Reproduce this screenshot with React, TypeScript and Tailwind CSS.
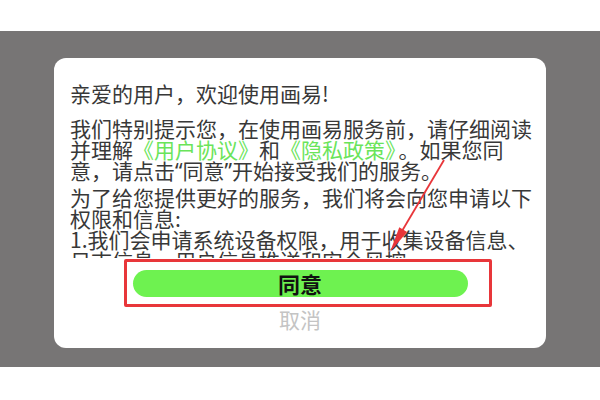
import React from 'react';

const bodyLines = [
  '为了给您提供更好的服务，我们将会向您申请以下',
  '权限和信息:',
  '1.我们会申请系统设备权限，用于收集设备信息、',
  '日志信息，用户信息推送和安全风控',
];

function PrivacyDialog() {
  return (
    <div className="relative w-[492px] h-[290px] bg-white rounded-xl flex flex-col">
      <div className="h-[200px] overflow-hidden pt-[25px] pl-4 text-[21px] leading-[21px] text-[#383838] whitespace-nowrap">
        <div>亲爱的用户，欢迎使用画易!</div>
        <div className="mt-[14px]">
          <div>我们特别提示您，在使用画易服务前，请仔细阅读</div>
          <div>
            并理解<span className="text-[#6ae45a]">《用户协议》</span>和
            <span className="text-[#6ae45a] mr-[3px]">《隐私政策》</span>。如果您同
          </div>
          <div>
            意，请点击<span className="font-['Noto_Sans']">“</span>同意
            <span className="font-['Noto_Sans']">”</span>开始接受我们的服务。
          </div>
        </div>
        <div className="mt-[5px]">
          {bodyLines.map((line) => (
            <div key={line}>{line}</div>
          ))}
        </div>
      </div>

      <div className="flex justify-center mt-3">
        <button className="w-[335px] h-[27px] rounded-full bg-[#6ef250] text-[22px] leading-[27px] font-bold text-[#111]">
          同意
        </button>
      </div>
      <div className="mt-[11px] text-center text-[21px] leading-[22px] text-[#c4c4c4]">取消</div>

      {/* highlight box drawn over the agree button */}
      <div className="absolute left-[70px] top-[201px] w-[368px] h-[48px] border-[3px] border-[#e8363a] rounded-[2px]" />
    </div>
  );
}

export default function App() {
  return (
    <div
      className="relative w-[600px] h-[400px] bg-white pt-[31px]"
      style={{ fontFamily: '"Noto Sans CJK SC", "Noto Sans", sans-serif' }}
    >
      <div className="h-[336px] bg-[#777575] flex justify-center pt-[27px]">
        <PrivacyDialog />
      </div>

      {/* pointer arrow */}
      <svg className="absolute inset-0 pointer-events-none" width="600" height="400" viewBox="0 0 600 400">
        <line x1="444" y1="160" x2="402" y2="231" stroke="#e8363a" strokeWidth="1.8" />
        <polygon points="390,252 407.1,231.9 399.3,227.3" fill="#e8363a" />
      </svg>
    </div>
  );
}
